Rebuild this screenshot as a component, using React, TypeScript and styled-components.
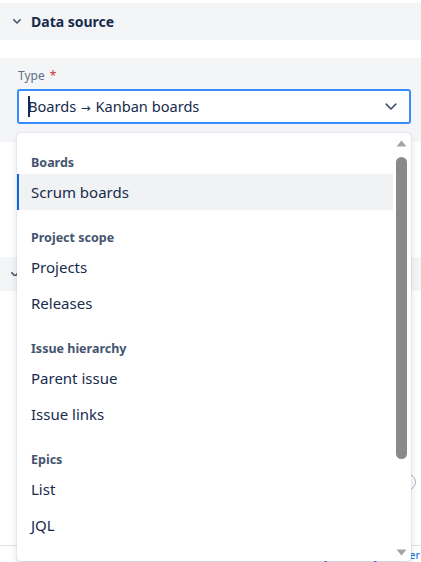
import React from "react";
import styled, { createGlobalStyle } from "styled-components";

const GlobalStyle = createGlobalStyle`
  html, body { margin: 0; padding: 0; background: #ffffff; }
  body { font-family: "Noto Sans", "Open Sans", sans-serif; color: #172b4d; }
  * { box-sizing: border-box; }
`;

const Page = styled.div`
  position: relative;
  width: 421px;
  height: 562px;
  overflow: hidden;
  padding-top: 3px;
  display: flex;
  flex-direction: column;
`;

const SectionHeader = styled.div<{ $mt?: number; $h: number; $pl: number }>`
  display: flex;
  align-items: center;
  gap: 10px;
  height: ${(p) => p.$h}px;
  margin-top: ${(p) => p.$mt ?? 0}px;
  padding-left: ${(p) => p.$pl}px;
  background: #f4f5f7;
  flex-shrink: 0;
`;

const SectionTitle = styled.span`
  font-size: 14px;
  font-weight: 700;
  color: #172b4d;
  line-height: 18px;
`;

const FieldPanel = styled.div`
  margin-top: 18px;
  height: 84px;
  background: #f4f5f7;
  padding: 10px 10px 0 17px;
  flex-shrink: 0;
`;

const Label = styled.div`
  font-size: 12px;
  line-height: 16px;
  color: #626f86;
  margin-left: 1px;
  margin-bottom: 5px;
  display: flex;
  gap: 5px;
`;

const Required = styled.span`
  color: #c9372c;
`;

const FieldWrap = styled.div`
  position: relative;
  width: 394px;
`;

const Input = styled.div`
  height: 35px;
  border: 2px solid #388bff;
  border-radius: 3px;
  background: #ffffff;
  display: flex;
  align-items: center;
  padding: 0 12px 0 9px;
`;

const Caret = styled.span`
  display: inline-block;
  width: 2px;
  height: 21px;
  background: #172b4d;
  margin-right: -2px;
  flex-shrink: 0;
`;

const InputText = styled.span`
  flex: 1;
  font-size: 14.6px;
  color: #172b4d;
  line-height: 20px;
  white-space: nowrap;
`;

const ArrowGlyph = styled.span`
  font-family: "DejaVu Sans", sans-serif;
  font-size: 11.5px;
  margin: 0 1px;
`;

const Menu = styled.div`
  position: absolute;
  top: calc(100% + 9px);
  left: 0;
  width: 394px;
  height: 428px;
  background: #ffffff;
  border-radius: 4px;
  box-shadow: 0 4px 8px -2px rgba(9, 30, 66, 0.25), 0 0 1px rgba(9, 30, 66, 0.31);
  display: flex;
  overflow: hidden;
  z-index: 10;
`;

const MenuList = styled.div`
  flex: 1;
  overflow: hidden;
  padding-top: 2px;
`;

const GroupHeading = styled.div`
  margin: 20px 0 3px;
  padding-left: 14px;
  font-size: 12.5px;
  font-weight: 700;
  line-height: 16px;
  color: #44546f;
`;

const Option = styled.div<{ $active?: boolean }>`
  height: 36px;
  display: flex;
  align-items: center;
  padding-left: 12px;
  border-left: 2px solid ${(p) => (p.$active ? "#0c66e4" : "transparent")};
  background: ${(p) => (p.$active ? "#f1f2f4" : "transparent")};
  font-size: 15px;
  color: #172b4d;
  white-space: nowrap;
`;

const ScrollBar = styled.div`
  width: 18px;
  display: flex;
  flex-direction: column;
  align-items: center;
  padding: 7px 1px 5px 0;
  flex-shrink: 0;
`;

const Thumb = styled.div`
  margin-top: 10px;
  width: 11px;
  height: 302px;
  border-radius: 6px;
  background: #8a8a8a;
`;

const Spacer = styled.div`
  flex: 1;
`;

const Gap = styled.div<{ $h: number }>`
  height: ${(p) => p.$h}px;
  flex-shrink: 0;
`;

const RadioRow = styled.div`
  display: flex;
  justify-content: flex-end;
  padding-right: 5px;
  flex-shrink: 0;
`;

const Radio = styled.div`
  width: 16px;
  height: 16px;
  border-radius: 50%;
  border: 1.5px solid #b3b9c4;
  background: #fff;
`;

const Divider = styled.div`
  height: 1px;
  background: #dfe1e6;
  flex-shrink: 0;
`;

const Footer = styled.div`
  display: flex;
  justify-content: flex-end;
  padding-top: 3px;
  padding-right: 1px;
  font-size: 11px;
  line-height: 12px;
  color: #0c66e4;
  white-space: nowrap;
`;

const FooterMuted = styled.span`
  color: #44546f;
  margin: 0 6px;
`;

const Chevron = ({ size, color, sw }: { size: number; color: string; sw: number }) => (
  <svg width={size} height={size * 0.6} viewBox="0 0 10 6" fill="none">
    <path d="M1 1l4 4 4-4" stroke={color} strokeWidth={sw} strokeLinecap="round" strokeLinejoin="round" />
  </svg>
);

const Arrow = ({ up }: { up?: boolean }) => (
  <svg width="11" height="7" viewBox="0 0 11 7">
    <path d={up ? "M5.5 0.5L10.5 6.5H0.5Z" : "M0.5 0.5H10.5L5.5 6.5Z"} fill="#a3a3a3" />
  </svg>
);

const groups: { title: string; items: string[] }[] = [
  { title: "Boards", items: ["Scrum boards"] },
  { title: "Project scope", items: ["Projects", "Releases"] },
  { title: "Issue hierarchy", items: ["Parent issue", "Issue links"] },
  { title: "Epics", items: ["List", "JQL"] },
];

export default function App() {
  return (
    <>
      <GlobalStyle />
      <Page>
        <SectionHeader $h={37} $pl={13}>
          <Chevron size={8} color="#44546f" sw={2} />
          <SectionTitle>Data source</SectionTitle>
        </SectionHeader>

        <FieldPanel>
          <Label>
            Type <Required>*</Required>
          </Label>
          <FieldWrap>
            <Input>
              <Caret />
              <InputText>
                Boards <ArrowGlyph>→</ArrowGlyph> Kanban boards
              </InputText>
              <Chevron size={12} color="#44546f" sw={1.4} />
            </Input>
            <Menu>
              <MenuList>
                {groups.map((g) => (
                  <div key={g.title}>
                    <GroupHeading>{g.title}</GroupHeading>
                    {g.items.map((it) => (
                      <Option key={it} $active={it === "Scrum boards"}>
                        {it}
                      </Option>
                    ))}
                  </div>
                ))}
              </MenuList>
              <ScrollBar>
                <Arrow up />
                <Thumb />
                <Spacer />
                <Arrow />
              </ScrollBar>
            </Menu>
          </FieldWrap>
        </FieldPanel>

        <SectionHeader $mt={115} $h={34} $pl={11}>
          <Chevron size={8} color="#44546f" sw={2} />
        </SectionHeader>

        <Gap $h={183} />
        <RadioRow>
          <Radio />
        </RadioRow>
        <Gap $h={55} />
        <Divider />
        <Footer>
          Preview<FooterMuted>·</FooterMuted>Velocity charts by Orbiter
        </Footer>
      </Page>
    </>
  );
}
